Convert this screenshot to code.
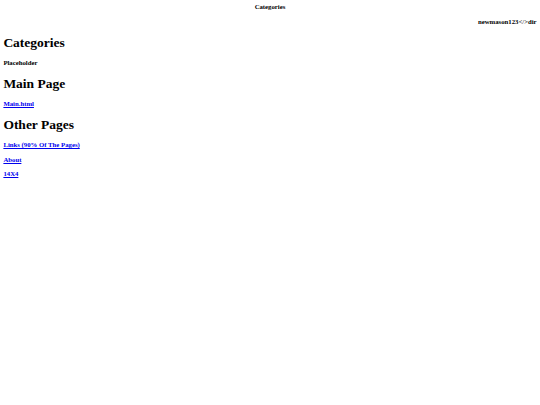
export default function App() {
  const links = ['Links (90% Of The Pages)', 'About', '14X4']

  return (
    <div
      className="m-[3.375px] text-black text-[6.75px] leading-[7.8px] font-bold"
      style={{ fontFamily: '"Liberation Serif", "Times New Roman", serif' }}
    >
      <div className="text-center">Categories</div>
      <p className="my-[6.75px] text-right">
        newmason123<span className="font-normal">&lt;/&gt;</span>dir
      </p>

      <h1 className="text-[13.5px] leading-[15.3px] my-[9px]">Categories</h1>
      <p className="my-[6.75px]">Placeholder</p>

      <h1 className="text-[13.5px] leading-[15.3px] my-[9px]">Main Page</h1>
      <p className="my-[6.75px]">
        <a href="#" className="text-[#0000ee] underline">Main.html</a>
      </p>

      <h1 className="text-[13.5px] leading-[15.3px] my-[9px]">Other Pages</h1>
      {links.map((l) => (
        <p key={l} className="my-[6.75px]">
          <a href="#" className="text-[#0000ee] underline">{l}</a>
        </p>
      ))}
    </div>
  )
}
